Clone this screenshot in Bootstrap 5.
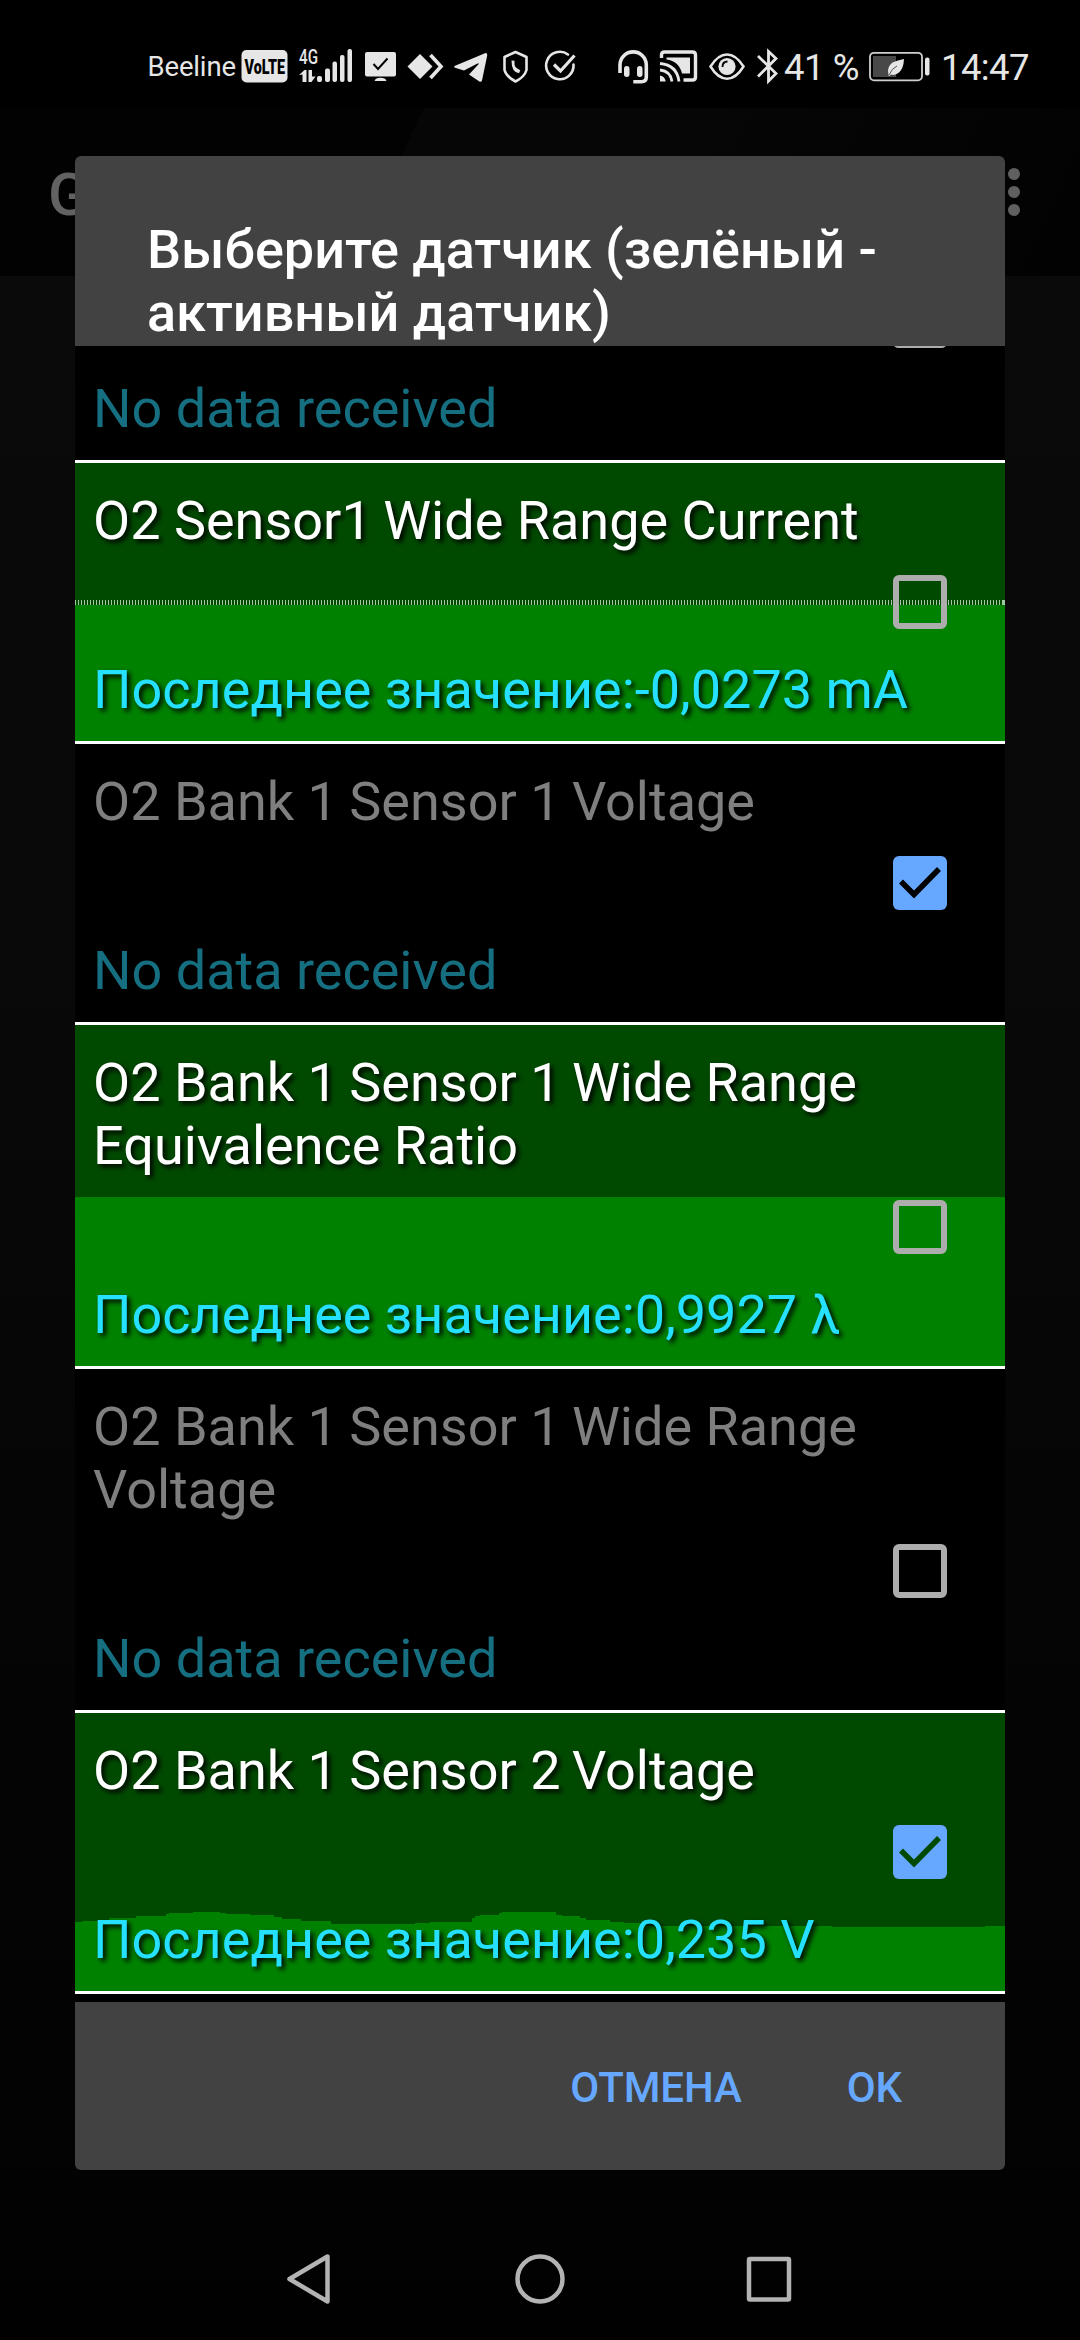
<!DOCTYPE html>
<html lang="ru">
<head>
<meta charset="utf-8">
<meta name="viewport" content="width=device-width, initial-scale=1">
<title>Выберите датчик</title>
<link href="https://cdn.jsdelivr.net/npm/bootstrap@5.3.0/dist/css/bootstrap.min.css" rel="stylesheet">
<style>
html,body{height:100%}
body{background:#060606;font-family:Roboto,sans-serif;color:#fff;overflow:hidden}
.screen{width:1080px;height:2340px;background:linear-gradient(180deg,#0a0a0a 0,#090909 40%,#050505 65%,#030303 90%,#010101 100%);overflow:hidden}
.statusbar{height:108px;background:#000}
.appbar{height:168px;background:linear-gradient(115deg,#020202 0,#020202 36.500%,#060606 36.700%,#060606 60%,#020202 100%);padding-left:48px}
.apptitle{font-size:60px;font-weight:500;color:#626262;line-height:70px;padding-top:5px}
.menu-dots{margin-right:52px}
.sensor-dialog{left:75px;top:156px;width:930px;height:2014px;background:#424242;border-radius:6px;overflow:hidden}
.dlg-title{height:190px;padding:62px 72px 0;font-size:54px;font-weight:500;line-height:63px}
.sensor-list{height:1656px;background:#000}
.sensor{border-bottom:3px solid #fff;padding:26px 18px 20px;font-size:54px;line-height:63px;height:281px;flex:none;color:#7f7f7f}
.sensor.tall{height:344px}
.sensor.first{height:117px}
.sensor .reading{color:#156f80}
.sensor.live{color:#fff;background-color:#004a00}
.sensor.live .caption,.sensor.live .reading{text-shadow:3px 3px 5px #000}
.sensor.live .reading{color:#26e0ff}
.num{margin-right:-2px}
.plot{left:0;bottom:0;width:930px}
.box{width:54px;height:54px;margin:23px 40px 0 0}
.box-edge{left:818px;top:0}
.z1{z-index:1}
.dlg-actions{padding:2px 103px 0 0;gap:105px}
.dlg-btn{font-size:42px;font-weight:500;color:#66a8ff;line-height:49px;padding:0;border:0;letter-spacing:-.1px}
.navkeys{left:0;top:2220px}
</style>
</head>
<body>
<div class="screen position-relative">
  <header class="statusbar">
    <svg width="1080" height="108" viewBox="0 0 1080 108" fill="#e6e6e6" stroke="none" class="d-block" font-family="Roboto, sans-serif">
      <text x="147.500" y="76" font-size="27.500" textLength="88.500">Beeline</text>
      <rect x="241.500" y="50" width="46" height="32.500" rx="5"/>
      <text x="244.500" y="73.500" font-size="20" font-weight="900" fill="#000" textLength="40.500" lengthAdjust="spacingAndGlyphs">VoLTE</text>
      <text x="299" y="64" font-size="21" font-weight="500" textLength="19" lengthAdjust="spacingAndGlyphs">4G</text>
      <path d="M299 75l5.500-5h2v12h-4v-7.500zM308.500 70h3.500v6.500h3.500l-4 5.500h-3z"/>
      <rect x="317" y="76" width="5" height="6" rx="2"/><rect x="325" y="68.500" width="5" height="13.500" rx="2"/><rect x="332.500" y="61.500" width="4.500" height="20.500" rx="2"/><rect x="340" y="55" width="4.500" height="27" rx="2"/><rect x="347.500" y="49" width="4.500" height="33" rx="2"/>
      <rect x="365" y="52" width="31" height="24.500" rx="2"/><path d="M374.500 81q1-3.300 6-3.300t6 3.300z"/>
      <path d="M373.500 64l4.500 5 9.500-10.500" fill="none" stroke="#000" stroke-width="2"/>
      <path d="M407.500 66.500L420 54l12.500 12.500L420 79z"/><path d="M430.500 55L441 66.500 430.500 78" fill="none" stroke="#e6e6e6" stroke-width="3.600"/>
      <path d="M454.500 66L485 53.200q2.500-.7 2.200 2.300L482 80.500q-.8 2.200-3 .8L469 74.500l9.500-10.300q.6-1.400-1-.8L464 70.500l-9-2.800q-1.500-.6-.5-1.700z"/>
      <path d="M515.500 52l11 5v13q-2 7-11 11.500-9-4.500-11-11.500V57z" fill="none" stroke="#e6e6e6" stroke-width="2.600" stroke-linejoin="round"/>
      <path d="M511.500 60.500l3 .2v4q1 3.500 2.800 3.800l3 1.800-1.300 3q-7.500-1-7.500-12.800z"/>
      <path d="M568 54.500a13.700 13.700 0 1 0 5.500 10" fill="none" stroke="#e6e6e6" stroke-width="2.600" stroke-linecap="round"/><path d="M554 64.500l6.500 6.500 14-15.500" fill="none" stroke="#e6e6e6" stroke-width="3.200"/>
      <path d="M620 73V65a13 13 0 0 1 26.300 0v12q0 4.700-5 4.700h-8" fill="none" stroke="#e6e6e6" stroke-width="3.600"/><rect x="624" y="66" width="5.500" height="11" rx="2.700"/><rect x="637" y="66" width="5.500" height="11" rx="2.700"/>
      <path d="M661.500 58v-3q0-3 3-3h28q3 0 3 3v22q0 3-3 3h-9" fill="none" stroke="#e6e6e6" stroke-width="3.400"/><path d="M666.500 57.500H690v16h-8Q679 61 666.500 59.500z"/>
      <path d="M660 75.500q5 1 5.700 6H660z"/><path d="M660 70q10.500 1 12 11.500M660 63.500q17 1.500 19 18" fill="none" stroke="#e6e6e6" stroke-width="2.800"/>
      <path d="M710.500 66.500Q718 54.500 727 54.500t16.500 12Q736 78.700 727 78.700t-16.500-12.200z" fill="none" stroke="#e6e6e6" stroke-width="2.500"/><circle cx="727" cy="66.500" r="8.600"/><path d="M722.500 67q0-5.500 5-5.500" stroke="#000" stroke-width="1.800" fill="none"/>
      <path d="M758 56l18 17.500-7.500 7.500V51.500l7.500 7L758 76.500" fill="none" stroke="#e6e6e6" stroke-width="2.800"/>
      <text x="784" y="80" font-size="36.500" textLength="75.500">41 %</text>
      <rect x="870" y="52.800" width="52" height="27.500" rx="4" fill="none" stroke="#cfcfcf" stroke-width="1.800"/><rect x="873" y="56" width="23" height="21" fill="#484848"/><path d="M888.500 75q-2-8 4-12.500 5-2.500 11.500-3.500-.5 10-5 13.500-4 3.500-8 2l-2 1.800z"/><path d="M889 75q3-7 8-9" stroke="#555" stroke-width="1" fill="none"/><rect x="925" y="57.500" width="4.500" height="18" rx="2"/>
      <text x="941" y="80" font-size="36.500" textLength="88.500">14:47</text>
    </svg>
  </header>
  <div class="appbar d-flex align-items-center">
    <span class="apptitle">G</span>
    <svg class="menu-dots ms-auto" width="28" height="60" viewBox="0 0 28 60" fill="#606060"><circle cx="14" cy="12" r="6"/><circle cx="14" cy="30" r="6"/><circle cx="14" cy="48" r="6"/></svg>
  </div>

  <main class="sensor-dialog position-absolute d-flex flex-column">
    <h1 class="dlg-title m-0">Выберите датчик (зелёный -<br>активный датчик)</h1>
    <div class="sensor-list d-flex flex-column overflow-hidden">
      <section class="sensor first position-relative d-flex align-items-end">
        <svg class="box-edge position-absolute" width="54" height="3"><path d="M1 0h52q-2 2-4 2H5q-2 0-4-2z" fill="#adadad"/></svg>
        <div class="reading">No data received</div>
      </section>
      <section class="sensor live position-relative d-flex flex-column">
        <svg class="plot position-absolute" height="141" viewBox="0 0 930 141">
          <defs><pattern id="comb" width="3" height="5" patternUnits="userSpaceOnUse"><rect width="1" height="5" fill="#a3c9a3"/></pattern></defs>
          <path d="M0 5h930v136H0z" fill="#008200"/><path d="M0 0h930v5H0z" fill="url(#comb)"/><path d="M927 0h3v5h-3z" fill="#a3c9a3"/></svg>
        <div class="caption z1">O2 Sensor<span class="num">1</span> Wide Range Current</div>
        <svg class="box z1 align-self-end" viewBox="0 0 54 54"><rect x="3" y="3" width="48" height="48" rx="3" fill="none" stroke="#adadad" stroke-width="6"/></svg>
        <div class="reading z1 mt-auto">Последнее значение:-0,0273 mA</div>
      </section>
      <section class="sensor d-flex flex-column">
        <div class="caption">O2 Bank <span class="num">1</span> Sensor <span class="num">1</span> Voltage</div>
        <svg class="box align-self-end" viewBox="0 0 54 54"><rect width="54" height="54" rx="6" fill="#66a8ff"/><path d="M8 25.500L21 38.500 46 13" fill="none" stroke="#000" stroke-width="5.500"/></svg>
        <div class="reading mt-auto">No data received</div>
      </section>
      <section class="sensor tall live position-relative d-flex flex-column">
        <svg class="plot position-absolute" height="169" viewBox="0 0 930 169"><path d="M0 0h930v169H0z" fill="#008200"/></svg>
        <div class="caption z1">O2 Bank <span class="num">1</span> Sensor <span class="num">1</span> Wide Range<br>Equivalence Ratio</div>
        <svg class="box z1 align-self-end" viewBox="0 0 54 54"><rect x="3" y="3" width="48" height="48" rx="3" fill="none" stroke="#adadad" stroke-width="6"/></svg>
        <div class="reading z1 mt-auto">Последнее значение:0,9927 λ</div>
      </section>
      <section class="sensor tall d-flex flex-column">
        <div class="caption">O2 Bank <span class="num">1</span> Sensor <span class="num">1</span> Wide Range<br>Voltage</div>
        <svg class="box align-self-end" viewBox="0 0 54 54"><rect x="3" y="3" width="48" height="48" rx="3" fill="none" stroke="#adadad" stroke-width="6"/></svg>
        <div class="reading mt-auto">No data received</div>
      </section>
      <section class="sensor live position-relative d-flex flex-column">
        <svg class="plot position-absolute" height="80" viewBox="0 0 930 80" shape-rendering="crispEdges"><path fill="#008200" d="M0 80V11H7V10H34V7H61V5H91V3H94V2H118V1H145V2H151V3H175V4H199V6H207V8H226V10H256V13H340V12H355V11H397V7H400V5H405V4H424V2H427V1H481V4H487V5H505V7H511V9H535V11H549V12H565V15H757V16H910V15H930V80Z"/></svg>
        <div class="caption z1">O2 Bank <span class="num">1</span> Sensor <span class="num">2</span> Voltage</div>
        <svg class="box z1 align-self-end" viewBox="0 0 54 54"><rect width="54" height="54" rx="6" fill="#66a8ff"/><path d="M8 25.500L21 38.500 46 13" fill="none" stroke="#004a00" stroke-width="5.500"/></svg>
        <div class="reading z1 mt-auto">Последнее значение:0,235 V</div>
      </section>
    </div>
    <footer class="dlg-actions d-flex justify-content-end align-items-center flex-grow-1">
      <button class="btn dlg-btn">ОТМЕНА</button><button class="btn dlg-btn">OK</button>
    </footer>
  </main>

  <nav class="navkeys position-absolute">
    <svg width="1080" height="120" viewBox="0 0 1080 120" fill="none" stroke="#b3b3b3" stroke-width="4.500" stroke-linejoin="round" class="d-block">
      <path d="M327.500 36.500v45L289.500 59z"/><circle cx="540" cy="59" r="22.500"/><rect x="749" y="39" width="40" height="40.500" rx="1"/>
    </svg>
  </nav>
</div>
<script src="https://cdn.jsdelivr.net/npm/bootstrap@5.3.0/dist/js/bootstrap.bundle.min.js"></script>
</body>
</html>
